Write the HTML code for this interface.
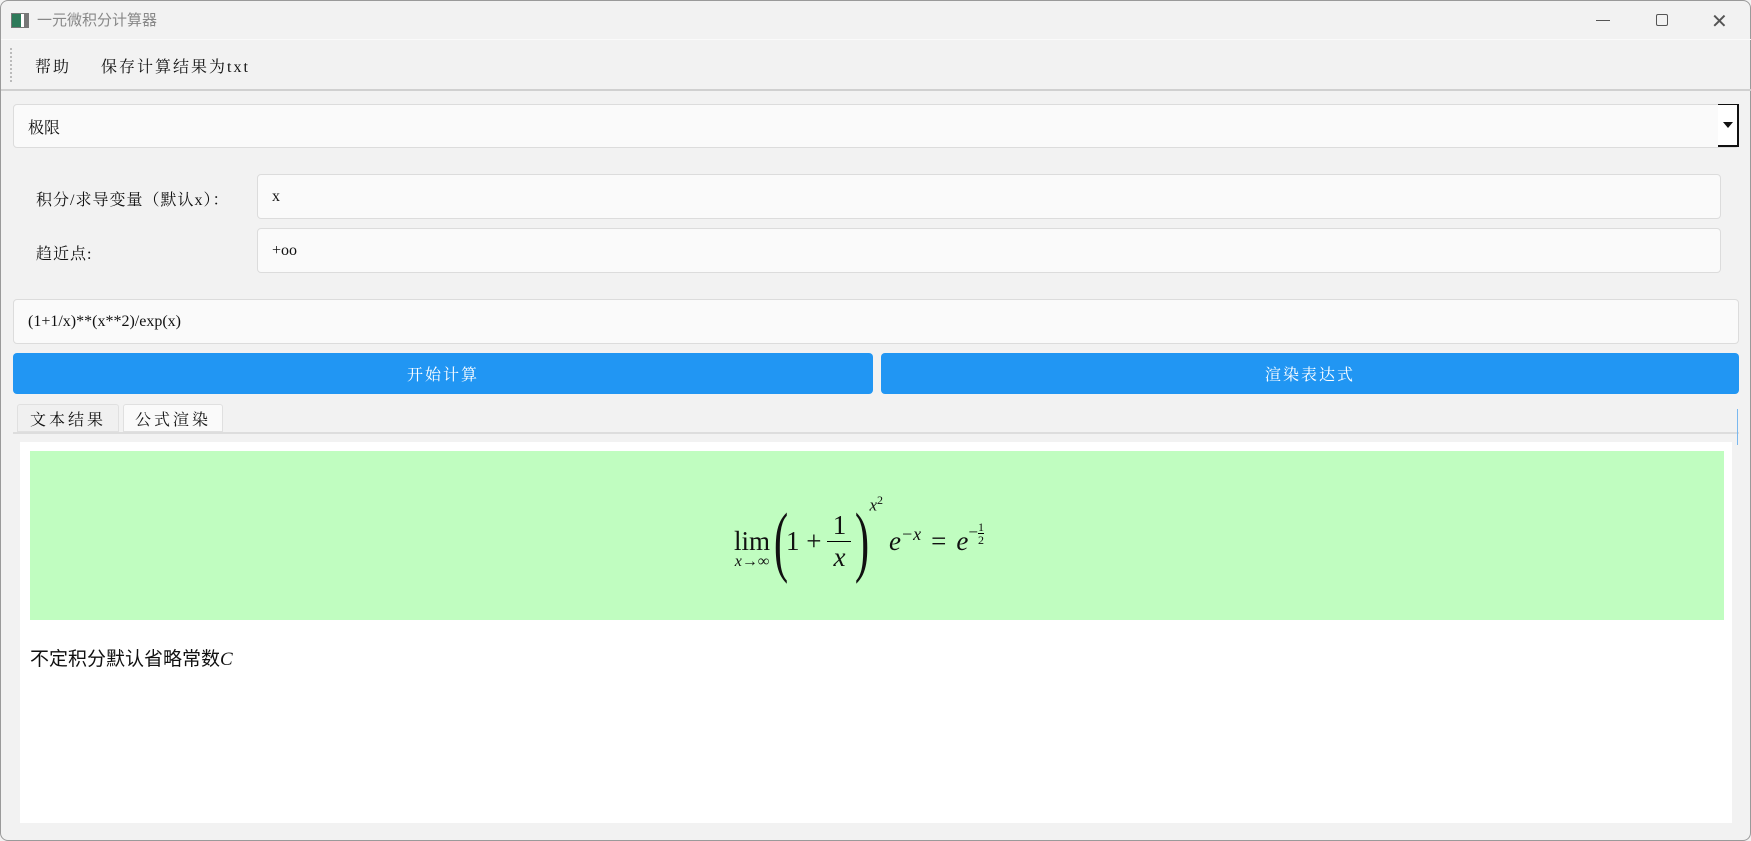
<!DOCTYPE html>
<html><head><meta charset="utf-8"><style>
*{box-sizing:border-box;margin:0;padding:0}
body{width:1751px;height:841px;background:#f2f2f2;position:relative;overflow:hidden;font-family:"Liberation Serif","Noto Serif CJK SC",serif;color:#111}
.win{position:absolute;left:0;top:0;width:1751px;height:841px;border:1px solid #9a9a9a;border-radius:8px;background:#f2f2f2}
.a{position:absolute}
.inp{position:absolute;background:#fafafa;border:1px solid #dcdcdc;border-radius:4px;font-size:16px;padding-left:14px;display:flex;align-items:center}
.btn{position:absolute;background:#2196f3;color:#fff;border-radius:4px;font-size:16px;display:flex;align-items:center;justify-content:center;letter-spacing:2px}
.tab{position:absolute;top:403px;height:28px;border:1px solid #e0e0e0;border-radius:3px 3px 0 0;font-size:16px;display:flex;align-items:center;justify-content:center;letter-spacing:3px}
.m{font-family:"Liberation Serif",serif;font-style:italic}
</style></head><body><div class="win">
<div class="a" style="left:10px;top:12px;width:18px;height:15px;border:1px solid #777;background:linear-gradient(90deg,#2e7a5a 0 55%,#fff 55% 75%,#777 75%)"></div>
<div class="a" style="left:36px;top:8px;font-family:'Liberation Sans','Noto Sans CJK SC',sans-serif;font-size:15px;color:#888">一元微积分计算器</div>
<div class="a" style="left:1595px;top:19px;width:14px;border-top:1px solid #555"></div>
<div class="a" style="left:1655px;top:13px;width:12px;height:12px;border:1px solid #555;border-radius:2px"></div>
<div class="a" style="left:1710px;top:8px;font-family:'Liberation Sans',sans-serif;font-size:20px;color:#555">✕</div>
<div class="a" style="left:0;top:38px;width:1751px;border-top:1px solid #fafafa"></div>
<div class="a" style="left:9px;top:47px;height:34px;border-left:2px dotted #bbb"></div>
<div class="a" style="left:34px;top:53px;font-size:16px;letter-spacing:2px">帮助</div>
<div class="a" style="left:100px;top:53px;font-size:16px;letter-spacing:2px">保存计算结果为txt</div>
<div class="a" style="left:0;top:88px;width:1751px;border-top:2px solid #d0d0d0"></div>
<div class="inp" style="left:12px;top:103px;width:1726px;height:44px">极限</div>
<div class="a" style="left:1717px;top:103px;width:21px;height:43px;background:#fff;border-right:2px solid #111;border-bottom:2px solid #111;border-top:1px solid #111"></div>
<div class="a" style="left:1722px;top:121px;width:0;height:0;border-left:5px solid transparent;border-right:5px solid transparent;border-top:6px solid #111"></div>
<div class="a" style="left:35px;top:186px;font-size:16px;letter-spacing:1px">积分/求导变量（默认x）：</div>
<div class="inp" style="left:256px;top:173px;width:1464px;height:45px">x</div>
<div class="a" style="left:35px;top:240px;font-size:16px;letter-spacing:1px">趋近点:</div>
<div class="inp" style="left:256px;top:227px;width:1464px;height:45px">+oo</div>
<div class="inp" style="left:12px;top:298px;width:1726px;height:45px">(1+1/x)**(x**2)/exp(x)</div>
<div class="btn" style="left:12px;top:352px;width:860px;height:41px">开始计算</div>
<div class="btn" style="left:880px;top:352px;width:858px;height:41px">渲染表达式</div>
<div class="tab" style="left:16px;width:102px;background:#f0f0f0">文本结果</div>
<div class="tab" style="left:122px;width:100px;background:#fafafa">公式渲染</div>
<div class="a" style="left:12px;top:431px;width:1726px;border-top:2px solid #ddd"></div>
<div class="a" style="left:1736px;top:408px;height:36px;border-left:1px solid #7ab8ef"></div>
<div class="a" style="left:19px;top:441px;width:1712px;height:381px;background:#fff"></div>
<div class="a" style="left:29px;top:450px;width:1694px;height:169px;background:#c0fdc0"></div>
<div class="a" style="left:733px;top:490px;height:100px;font-size:27px;display:flex;align-items:center;font-family:'Liberation Serif',serif">
 <div style="display:flex;flex-direction:column;align-items:center;margin-right:6px;margin-top:14px"><span>lim</span><span class="m" style="font-size:16px;margin-top:-4px">x→∞</span></div>
 <span style="font-size:78px;transform:scaleX(.55);display:inline-block;margin:0 -8px;font-weight:300">(</span>
 <span>1 + </span>
 <div style="display:flex;flex-direction:column;align-items:center;margin:0 6px"><span>1</span><span style="width:24px;border-top:1.5px solid #000"></span><span class="m">x</span></div>
 <span style="font-size:78px;transform:scaleX(.55);display:inline-block;margin:0 -8px">)</span>
 <span class="m" style="font-size:17px;align-self:flex-start;margin-top:2px;margin-left:2px">x<sup style="font-size:12px;font-style:normal">2</sup></span>
 <span class="m" style="margin-left:6px">e</span><span class="m" style="font-size:18px;margin-top:-14px">−x</span>
 <span style="margin:0 10px">=</span>
 <span class="m">e</span><span style="font-size:17px;margin-top:-16px">−<span style="display:inline-flex;flex-direction:column;font-size:12px;vertical-align:middle;line-height:12px;text-align:center"><span>1</span><span style="border-top:1px solid #000">2</span></span></span>
</div>
<div class="a" style="left:29px;top:643px;font-family:'Liberation Sans','Noto Sans CJK SC',sans-serif;font-size:19px">不定积分默认省略常数<span class="m" style="font-family:'Liberation Serif',serif">C</span></div>
</div></body></html>
